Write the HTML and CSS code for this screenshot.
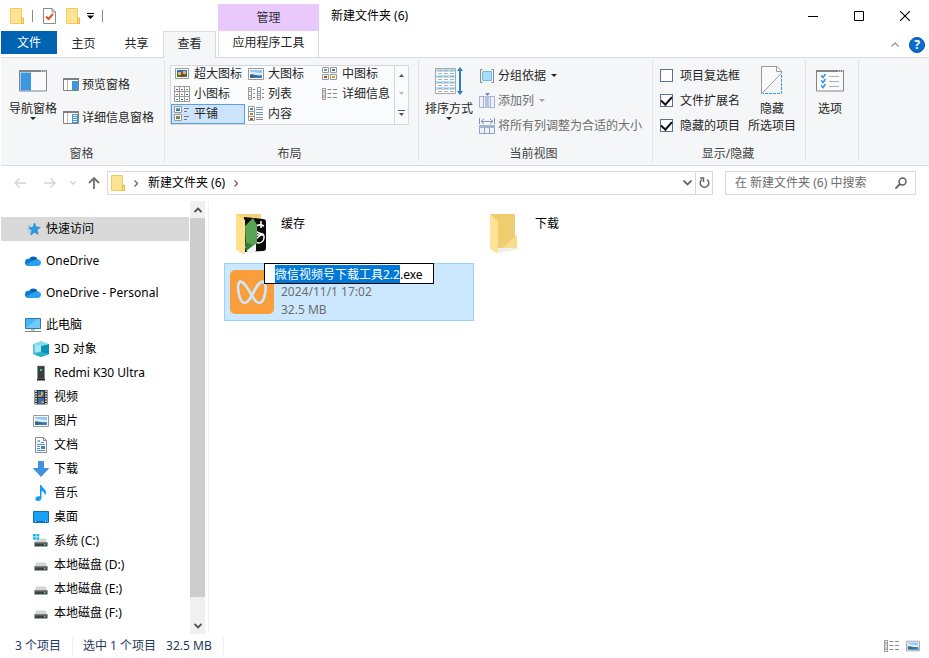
FILE: index.html
```html
<!DOCTYPE html>
<html lang="zh-CN">
<head>
    <meta charset="UTF-8">
    <meta name="viewport" content="width=device-width, initial-scale=1.0">
    <title>新建文件夹 (6)</title>
    <link rel="stylesheet" href="styles.css">
</head>
<body>
    <svg class="symbols" aria-hidden="true">
        <symbol id="i-folder" viewBox="0 0 14 16">
            <path d="M.5.5h11v9.5h2v5.5H.5z" fill="#ffe394" stroke="#efcb62"/>
            <path d="M11.5 10.5v5h2v-5z" fill="#ffe394" stroke="#e8b93c"/>
        </symbol>
        <symbol id="i-cloud" viewBox="0 0 16 16">
            <path d="M4 6.5A4.600 4.600 0 0 1 12.600 6.500L9 11z" fill="#0a5fb5"/>
            <path d="M3.500 13a3.600 3.600 0 0 1 .3-7.200c1.500-.3 2.700.3 3.700 1.200L11 11z" fill="#0f78d4"/>
            <path d="M3.500 13c-1.400 0-2.400-.6-3-1.600L9 7.300c1-.9 2.400-1.100 3.700-.8 2 .2 3.300 1.600 3.300 3.300s-1.400 3.200-3.200 3.200z" fill="#28a0ea"/>
        </symbol>
        <symbol id="i-drive" viewBox="0 0 16 16">
            <path d="M3.500 5.500h9l2 4.500h-13z" fill="#d2d4d6"/>
            <path d="M1.500 9.500h13v4h-13z" fill="#3f4245"/>
            <path d="M1.500 9.500h13v1h-13z" fill="#777"/>
            <path d="M11 11h1.500v1.500H11z" fill="#3ce04f"/>
        </symbol>
        <symbol id="i-picture" viewBox="0 0 16 16">
            <path d="M.5 2.500h15v11H.5z" fill="#fff" stroke="#999"/>
            <path d="M2 4h12v8H2z" fill="#8ec8f6"/>
            <path d="M2 6c3-1 5 1 12 1v2H2z" fill="#dceefb"/>
            <path d="M2 8.500c3-1 5 1.500 12 1V12H2z" fill="#3d6a78"/>
            <path d="M6 11l8-1v2H5z" fill="#3b7ed0"/>
        </symbol>
        <symbol id="i-details" viewBox="0 0 16 16">
            <path d="M.5 2.500h3v11h-3zM.5 6h3M.5 10h3" fill="#fff" stroke="#999"/>
            <path d="M1.500 4h1v1h-1z" fill="#36c"/><path d="M1.500 7.500h1v1h-1z" fill="#396"/><path d="M1.500 11h1v1h-1z" fill="#c33"/>
            <path d="M5.500 3.500h4m1.500 0h4m-9.500 4h4m1.500 0h4m-9.500 4h4m1.500 0h4" stroke="#8a8a8a"/>
        </symbol>
    </svg>

    <header class="title-bar">
        <div class="quick-access">
            <svg width="14" height="16"><use href="#i-folder"/></svg>
            <span class="bar"></span>
            <button type="button" aria-label="属性">
                <svg width="13" height="16" viewBox="0 0 13 16">
                    <path d="M.5.5h8.500l3.500 3.500v11.500H.5z" fill="#fff" stroke="#8b8b8b"/>
                    <path d="M9 .5V4h3.500" fill="none" stroke="#8b8b8b"/>
                    <path d="M3 8.500l2.500 2.500L10 6" fill="none" stroke="#e0521d" stroke-width="2"/>
                </svg>
            </button>
            <button type="button" aria-label="新建文件夹"><svg width="14" height="16"><use href="#i-folder"/></svg></button>
            <button type="button" class="customize" aria-label="自定义"><svg width="7" height="6" viewBox="0 0 7 6"><path d="M0 0h7v1H0zM0 2.500h7L3.500 6z"/></svg></button>
            <span class="bar"></span>
        </div>
        <div class="context-title">管理</div>
        <h1 class="window-title">新建文件夹 (6)</h1>
        <div class="window-buttons">
            <button type="button" aria-label="最小化"><svg width="10" height="10" viewBox="0 0 10 10"><path d="M0 5.500h10" stroke="#000"/></svg></button>
            <button type="button" aria-label="最大化"><svg width="10" height="10" viewBox="0 0 10 10"><path d="M.5.5h9v9h-9z" fill="none" stroke="#000"/></svg></button>
            <button type="button" aria-label="关闭"><svg width="10" height="10" viewBox="0 0 10 10"><path d="M0 0l10 10M10 0L0 10" stroke="#000" stroke-width="1.100"/></svg></button>
        </div>
    </header>

    <nav class="tabs">
        <button type="button" class="tab tab-file">文件</button>
        <button type="button" class="tab">主页</button>
        <button type="button" class="tab">共享</button>
        <button type="button" class="tab active">查看</button>
        <button type="button" class="tab tab-context">应用程序工具</button>
        <div class="tabs-right">
            <button type="button" aria-label="最小化功能区"><svg width="8" height="5" viewBox="0 0 8 5"><path d="M.5 4.500L4 1l3.500 3.500" fill="none" stroke="#999" stroke-width="1.300"/></svg></button>
            <button type="button" class="help" aria-label="帮助">?</button>
        </div>
    </nav>

    <section class="ribbon">
        <div class="group group-panes">
            <div class="group-body">
                <button type="button" class="big">
                    <span class="big-icon">
                        <svg width="28" height="22" viewBox="0 0 28 22">
                            <path d="M.5.500h27v20.500H.5z" fill="#fafafa" stroke="#858585"/>
                            <path d="M0 0h28v2H0z" fill="#858585"/>
                            <path d="M22 .5h1v1h-1zM24 .5h1v1h-1zM26 .5h1v1h-1z" fill="#fff"/>
                            <path d="M1.500 2.500h10.500v18H1.500z" fill="#3d97e0"/>
                        </svg>
                    </span>
                    导航窗格
                    <span class="caret"></span>
                </button>
                <div class="stack">
                    <button type="button" class="small">
                        <svg width="16" height="13" viewBox="0 0 16 13">
                            <path d="M.5.500h15v12H.5z" fill="#fff" stroke="#808080"/><path d="M0 0h16v2H0z" fill="#808080"/>
                            <path d="M4.500 2v10" stroke="#bbb"/><path d="M9 3h6v9H9z" fill="#3d97e0"/>
                        </svg>
                        预览窗格
                    </button>
                    <button type="button" class="small">
                        <svg width="16" height="13" viewBox="0 0 16 13">
                            <path d="M.5.500h15v12H.5z" fill="#fff" stroke="#808080"/><path d="M0 0h16v2H0z" fill="#808080"/>
                            <path d="M4.500 2v10" stroke="#bbb"/><path d="M9 3h6v9H9z" fill="#3d97e0"/>
                            <path d="M10 4.500h4m-4 2h4m-4 2h4m-4 2h4" stroke="#fff"/>
                        </svg>
                        详细信息窗格
                    </button>
                </div>
            </div>
            <div class="group-name">窗格</div>
        </div>

        <div class="group group-layout">
            <div class="group-body">
                <div class="gallery">
                    <div class="gallery-items">
                        <button type="button" class="view first-row">
                            <svg width="16" height="16" viewBox="0 0 16 16"><path d="M1.500 2.500h13v10h-13z" fill="#fff" stroke="#999"/><path d="M3 4h10v7H3z" fill="#3467c4"/><path d="M3 8h10v3H3z" fill="#397a35"/><path d="M4 6h3v3H4zM9 5h3v3H9z" fill="#efb72d"/><path d="M7 8h3v3H7z" fill="#a33026"/></svg>
                            超大图标
                        </button>
                        <button type="button" class="view first-row"><svg width="16" height="16"><use href="#i-picture"/></svg>大图标</button>
                        <button type="button" class="view first-row">
                            <svg width="16" height="16" viewBox="0 0 16 16"><path d="M.5 1.500h6v5h-6zM8.500 1.500h6v5h-6zM.5 8.500h6v5h-6zM8.500 8.500h6v5h-6z" fill="#fff" stroke="#999"/><path d="M2 3h3v2H2z" fill="#5b9bd0"/><path d="M10 3h3v2h-3z" fill="#4c8a52"/><path d="M2 10h3v2H2z" fill="#c43b1c"/><path d="M10 10h3v2h-3z" fill="#d6a21d"/></svg>
                            中图标
                        </button>
                        <button type="button" class="view">
                            <svg width="16" height="16" viewBox="0 0 16 16"><path d="M.5.500h15v15H.5zM5.500.500v15M10.500.500v15M.5 5.500h15M.5 10.500h15" fill="#fff" stroke="#999"/><path d="M2 3h2v1H2zM12 8h2v1h-2zM7 13h2v1H7z" fill="#36c"/><path d="M7 3h2v1H7zM2 8h2v1H2zM12 13h2v1h-2z" fill="#c52"/><path d="M12 3h2v1h-2zM7 8h2v1H7zM2 13h2v1H2z" fill="#396"/></svg>
                            小图标
                        </button>
                        <button type="button" class="view">
                            <svg width="16" height="16" viewBox="0 0 16 16"><path d="M.5 1.500h3v12h-3zM.5 5.500h3m-3 4h3M9.500 1.500h3v12h-3zM9.500 5.500h3m-3 4h3" fill="#fff" stroke="#999"/><path d="M5 3.500h2m-2 4h2m-2 4h2M14 3.500h2m-2 4h2m-2 4h2" stroke="#888"/><path d="M1.500 3h1v1h-1zM10.500 7h1v1h-1z" fill="#36c"/><path d="M1.500 11h1v1h-1zM10.500 11h1v1h-1z" fill="#c33"/></svg>
                            列表
                        </button>
                        <button type="button" class="view"><svg width="16" height="16"><use href="#i-details"/></svg>详细信息</button>
                        <button type="button" class="view selected">
                            <svg width="16" height="16" viewBox="0 0 16 16"><path d="M.5.500h7v6h-7zM.5 8.500h7v6h-7z" fill="#fff" stroke="#999"/><path d="M2 2h4v3H2z" fill="#4f9ad8"/><path d="M2 4h4v1H2z" fill="#34684a"/><path d="M2 10h4v3H2z" fill="#4a9a50"/><path d="M4 10h2v2H4z" fill="#d86b22"/><path d="M10 2.500h5m-5 3h3m-3 5h5m-5 3h3" stroke="#777"/></svg>
                            平铺
                        </button>
                        <button type="button" class="view">
                            <svg width="16" height="16" viewBox="0 0 16 16"><path d="M.5.500h6v14h-6zM.5 5.500h6M.5 10.500h6" fill="#fff" stroke="#999"/><path d="M2 2h3v2H2z" fill="#3f7fc4"/><path d="M2 7h3v2H2z" fill="#a58a25"/><path d="M2 12h3v2H2z" fill="#b54a30"/><path d="M8 1.500h7m-7 5h7m-7 5h7" stroke="#6d9be6"/><path d="M8 3.500h7m-7 5h7m-7 5h7" stroke="#888"/></svg>
                            内容
                        </button>
                    </div>
                    <div class="gallery-scroll">
                        <button type="button" aria-label="上一行"><svg width="5" height="3" viewBox="0 0 5 3"><path d="M0 3h5L2.500 0z" fill="#44546a"/></svg></button>
                        <button type="button" aria-label="下一行"><svg width="5" height="3" viewBox="0 0 5 3"><path d="M0 0h5L2.500 3z" fill="#b4bac2"/></svg></button>
                        <button type="button" aria-label="更多"><svg width="7" height="6" viewBox="0 0 7 6"><path d="M0 0h7v1H0zM1 3h5L3.500 6z" fill="#44546a"/></svg></button>
                    </div>
                </div>
            </div>
            <div class="group-name">布局</div>
        </div>

        <div class="group group-current">
            <div class="group-body">
                <button type="button" class="big">
                    <span class="big-icon">
                        <svg width="30" height="28" viewBox="0 0 30 28">
                            <path d="M1.500 1.500h20v25h-20z" fill="#fff" stroke="#a8a8a8"/>
                            <path d="M2 2h19v3H2zM2 8h19v3H2zM2 14h19v3H2zM2 20h19v3H2z" fill="#b5e0f7"/>
                            <path d="M4 3.500h16M4 6.500h16M4 9.500h16M4 12.500h16M4 15.500h16M4 18.500h16M4 21.500h16M4 24.500h16" fill="none" stroke="#b0b0b0" stroke-dasharray="4 2"/>
                            <path d="M25 3h2v22h-2z" fill="#2c7ec4"/><path d="M23 4l3-4 3 4zM23 24l3 4 3-4z" fill="#2c7ec4"/>
                        </svg>
                    </span>
                    排序方式
                    <span class="caret"></span>
                </button>
                <div class="stack">
                    <button type="button" class="small">
                        <svg width="16" height="16" viewBox="0 0 16 16"><path d="M3.500 1.500h-2v13h2M12.500 1.500h2v13h-2" fill="none" stroke="#8a8a8a"/><path d="M3.500 3.500h9v9h-9z" fill="#a9dcfb" stroke="#6fb9e8"/></svg>
                        分组依据
                        <span class="caret"></span>
                    </button>
                    <button type="button" class="small" disabled>
                        <svg width="16" height="16" viewBox="0 0 16 16"><path d="M.5 3.500h15v11H.5zM4.500 3v11M11.500 3v11" fill="#eef1f8" stroke="#a3b2cf"/><path d="M6 3h4v12H6z" fill="#b3c2df"/><path d="M6 0h5L8.500 3z" fill="#7288b5"/></svg>
                        添加列
                        <span class="caret"></span>
                    </button>
                    <button type="button" class="small" disabled>
                        <svg width="16" height="16" viewBox="0 0 16 16"><path d="M.5 0v6M15.500 0v6M2 3.500h12M5 1L2 3.500 5 6M11 1l3 2.500L11 6" fill="none" stroke="#7f93bb"/><path d="M.5 7.500h15v8H.5zM5.500 10v6M10.500 10v6" fill="#eef1f8" stroke="#8fa1c5"/><path d="M0 7h16v3H0z" fill="#a3b2cf"/></svg>
                        将所有列调整为合适的大小
                    </button>
                </div>
            </div>
            <div class="group-name">当前视图</div>
        </div>

        <div class="group group-show">
            <div class="group-body">
                <div class="stack">
                    <label class="check"><input type="checkbox">项目复选框</label>
                    <label class="check"><input type="checkbox" checked>文件扩展名</label>
                    <label class="check"><input type="checkbox" checked>隐藏的项目</label>
                </div>
                <button type="button" class="big">
                    <span class="big-icon">
                        <svg width="22" height="29" viewBox="0 0 22 29">
                            <path d="M.5 28V.500H16L20.500 5v2z" fill="#fafafa" stroke="#999"/>
                            <path d="M15.500.500v5h5" fill="none" stroke="#999"/>
                            <path d="M20.500 9v18.500H2" fill="none" stroke="#3d97e0" stroke-dasharray="3 1"/>
                        </svg>
                    </span>
                    隐藏<br>所选项目
                </button>
            </div>
            <div class="group-name">显示/隐藏</div>
        </div>

        <div class="group group-options">
            <div class="group-body">
                <button type="button" class="big">
                    <span class="big-icon">
                        <svg width="28" height="22" viewBox="0 0 28 22">
                            <path d="M.5.500h27v20.500H.5z" fill="#fafafa" stroke="#858585"/>
                            <path d="M0 0h28v2H0z" fill="#858585"/>
                            <path d="M22 .5h1v1h-1zM24 .5h1v1h-1zM26 .5h1v1h-1z" fill="#fff"/>
                            <path d="M5 5.500l2 2L9.500 4M5 10.500l2 2L9.500 9M5 15.500l2 2 2.500-3.500" fill="none" stroke="#3d97e0" stroke-width="1.600"/>
                            <path d="M13 6.500h10M13 11.500h10M13 16.500h10" stroke="#b0b0b0"/>
                        </svg>
                    </span>
                    选项
                </button>
            </div>
        </div>
    </section>

    <section class="address-row">
        <div class="history">
            <button type="button" aria-label="后退"><svg width="12" height="12" viewBox="0 0 12 12"><path d="M12 6H1M5.500 1.500L1 6l4.500 4.500" fill="none" stroke="#d5d5d5" stroke-width="1.500"/></svg></button>
            <button type="button" aria-label="前进"><svg width="12" height="12" viewBox="0 0 12 12"><path d="M0 6h11M6.500 1.500L11 6l-4.500 4.500" fill="none" stroke="#d5d5d5" stroke-width="1.500"/></svg></button>
            <button type="button" class="recent" aria-label="最近"><svg width="6" height="4" viewBox="0 0 6 4"><path d="M.5.500L3 3 5.500.5" fill="none" stroke="#cfcfcf" stroke-width="1.300"/></svg></button>
            <button type="button" class="up" aria-label="上移"><svg width="12" height="12" viewBox="0 0 12 12"><path d="M6 12V1M1 6l5-5 5 5" fill="none" stroke="#707070" stroke-width="1.800"/></svg></button>
        </div>
        <div class="address">
            <svg width="14" height="16"><use href="#i-folder"/></svg>
            <svg class="crumb-arrow" width="4" height="7" viewBox="0 0 4 7"><path d="M.5.500l3 3-3 3" fill="none" stroke="#666" stroke-width="1.300"/></svg>
            <a href="#">新建文件夹 (6)</a>
            <svg class="crumb-arrow" width="4" height="7" viewBox="0 0 4 7"><path d="M.5.500l3 3-3 3" fill="none" stroke="#666" stroke-width="1.300"/></svg>
            <button type="button" class="drop" aria-label="以前的位置"><svg width="9" height="6" viewBox="0 0 9 6"><path d="M.5.500l4 4 4-4" fill="none" stroke="#666" stroke-width="1.800"/></svg></button>
            <button type="button" class="refresh" aria-label="刷新"><svg width="11" height="12" viewBox="0 0 11 12"><path d="M8 2.500a4.300 4.300 0 1 1-5 0M1 1h3.500v4" fill="none" stroke="#666" stroke-width="1.500"/></svg></button>
        </div>
        <div class="search">
            <input type="text" aria-label="搜索" placeholder="在 新建文件夹 (6) 中搜索">
            <svg width="12" height="12" viewBox="0 0 12 12"><circle cx="7.500" cy="4.500" r="3.500" fill="none" stroke="#606060" stroke-width="1.500"/><path d="M5 7L.5 11.500" stroke="#606060" stroke-width="1.800"/></svg>
        </div>
    </section>

    <main class="main">
        <nav class="tree">
            <a href="#" class="root current"><svg width="16" height="16" viewBox="0 0 16 16"><path d="M9.500 2l1.600 4 4.200.3-3.300 2.700 1.200 4.500-3.700-2.300-3.800 2.800 1.200-4.400L3.800 6.800l4-.4z" fill="#2a9be8" stroke="#1878be" stroke-width=".6"/><path d="M3 5h2.500M2.500 8h3M3.500 11h2.500" stroke="#64b5ec"/></svg>快速访问</a>
            <a href="#" class="root"><svg width="16" height="16"><use href="#i-cloud"/></svg>OneDrive</a>
            <a href="#" class="root"><svg width="16" height="16"><use href="#i-cloud"/></svg>OneDrive - Personal</a>
            <a href="#" class="root"><svg width="16" height="16" viewBox="0 0 16 16"><path d="M.5 1.500h15v10H.5z" fill="#49b4f5" stroke="#3077ab"/><path d="M1 11L12 2h3v9z" fill="#72cbff"/><path d="M6 12h4v2H6z" fill="#b9c4cc"/><path d="M0 14.500h16" stroke="#7b8c99"/></svg>此电脑</a>
            <a href="#"><svg width="16" height="16" viewBox="0 0 16 16"><path d="M0 3l8-3 8 3-8 2z" fill="#7fdce8"/><path d="M0 3l8 2v11l-8-3z" fill="#5cc8dc"/><path d="M8 5l8-2v10l-8 3z" fill="#0594b4"/><path d="M8 11l8 2-8 3-8-3z" fill="#2bb0c8"/><path d="M8 5L2 3.500v8l6-1z" fill="#a6e6ee"/></svg>3D 对象</a>
            <a href="#"><svg width="16" height="16" viewBox="0 0 16 16"><path d="M4.500 1h7v13h-7z" fill="#393c3f" stroke="#888" stroke-width=".6"/><path d="M7 4h2v2H7z" fill="#3ce04f"/><path d="M4 14h8v1.500H4z" fill="#222"/></svg>Redmi K30 Ultra</a>
            <a href="#"><svg width="16" height="16" viewBox="0 0 16 16"><path d="M1.500 1h13v14.500h-13z" fill="#333"/><path d="M5 2h6v6H5zM5 9h6v6H5z" fill="#3c69be"/><path d="M5 6h4v2H5zM8 12h3v2H8z" fill="#b9a035"/><path d="M8 3h2v3H8z" fill="#d9a632"/><path d="M3 1.500v14M13 1.500v14" stroke="#eee" stroke-width="1.500" stroke-dasharray="1.500 1"/></svg>视频</a>
            <a href="#"><svg width="16" height="16"><use href="#i-picture"/></svg>图片</a>
            <a href="#"><svg width="16" height="16" viewBox="0 0 16 16"><path d="M2.500.500h8l3 3v12h-11z" fill="#fff" stroke="#8b8b8b"/><path d="M10.500.500v3h3" fill="none" stroke="#8b8b8b"/><path d="M4 5.500L6 3l1 2.500M8 5.500h3M4 7.500h8M4 9.500h3M4 11.500h3M4 13.500h8" fill="none" stroke="#4a96cf"/><path d="M8 9h4v3H8z" fill="#3e83b4"/></svg>文档</a>
            <a href="#"><svg width="16" height="16" viewBox="0 0 16 16"><path d="M5.500.500h5v7h5L8 15.500.5 7.500h5z" fill="#3d93e0" stroke="#2a78c0" stroke-width=".7"/></svg>下载</a>
            <a href="#"><svg width="16" height="16" viewBox="0 0 16 16"><path d="M7 0h1.500c.5 3 4.500 4 4.500 7.500 0 1.500-.7 2.500-1.300 3C12 7.500 10 6.500 8.500 6v6.500C8.500 14.500 7 16 5 16s-3-1-2.600-2.500C2.800 12 5 11 7 11.500z" fill="#139df2"/></svg>音乐</a>
            <a href="#"><svg width="16" height="16" viewBox="0 0 16 16"><path d="M.5 2.500h15v11H.5z" fill="#18a0f8" stroke="#0b70b5"/><path d="M1 12h14v1.500H1z" fill="#0c70b8"/><path d="M2 12.500h1m9 0h1m1 0h.5" stroke="#fff"/></svg>桌面</a>
            <a href="#"><svg width="16" height="16" viewBox="0 0 16 16"><use href="#i-drive"/><path d="M0 0h7v7H0z" fill="#fff"/><path d="M0 1h2.800v2.500H0zM3.500 1h2.800v2.500H3.500zM0 4.200h2.800v2.500H0zM3.500 4.200h2.800v2.500H3.500z" fill="#14b4f0"/></svg>系统 (C:)</a>
            <a href="#"><svg width="16" height="16"><use href="#i-drive"/></svg>本地磁盘 (D:)</a>
            <a href="#"><svg width="16" height="16"><use href="#i-drive"/></svg>本地磁盘 (E:)</a>
            <a href="#"><svg width="16" height="16"><use href="#i-drive"/></svg>本地磁盘 (F:)</a>
        </nav>
        <div class="scrollbar">
            <button type="button" aria-label="向上滚动"><svg width="8" height="6" viewBox="0 0 8 6"><path d="M.5 5L4 1.500 7.500 5" fill="none" stroke="#505050" stroke-width="1.800"/></svg></button>
            <div class="track"><div class="thumb"></div></div>
            <button type="button" aria-label="向下滚动"><svg width="8" height="6" viewBox="0 0 8 6"><path d="M.5 1L4 4.500 7.500 1" fill="none" stroke="#505050" stroke-width="1.800"/></svg></button>
        </div>
        <div class="files">
            <div class="file">
                <svg width="44" height="44" viewBox="0 0 44 44">
                    <path d="M6 4h25v36H6z" fill="#f3d27b"/>
                    <path d="M14 7l19 2q3 0 3 3v26q0 3-3 3l-19 1z" fill="#0b0b0b"/>
                    <path d="M34 16c-6-3-11 1-8 5s9 1 8 7-7 6-9 3M31 11v7M27 25h7M26 29l6-5" fill="none" stroke="#fff" stroke-width="1.500"/>
                    <path d="M15 37l11-16v20l-7 4z" fill="#f4f4f4"/>
                    <path d="M15 16l8-8 4 7v18l-11 8z" fill="#58a355"/>
                    <path d="M15 32l8 3-7 6z" fill="#2e7d3a"/>
                    <path d="M6 4l9 6v35l-9-5z" fill="#ffe08c"/>
                </svg>
                <div class="file-text"><div>缓存</div></div>
            </div>
            <div class="file">
                <svg width="44" height="44" viewBox="0 0 44 44">
                    <path d="M13 38h20l3 1-21 4z" fill="#eee"/>
                    <path d="M6 4h25v22h2v12H6z" fill="#f0cc70"/>
                    <path d="M31 26h2v12H18z" fill="#f7dc8c"/>
                    <path d="M6 4l8 7v33l-8-5z" fill="#ffe394"/>
                </svg>
                <div class="file-text"><div>下载</div></div>
            </div>
            <div class="file selected">
                <svg width="44" height="44" viewBox="0 0 44 44">
                    <rect width="44" height="44" rx="5" fill="#fa9d3b"/>
                    <path d="M10 11.500C6 15 9 33 15 33s11-22 18-21.500C38 15 35 33 29 33S17 11 10 11.500z" fill="none" stroke="#cce8ff" stroke-width="2.600"/>
                </svg>
                <div class="file-text">
                    <div class="rename"><input type="text" id="rename" aria-label="重命名" value="微信视频号下载工具2.2.exe"></div>
                    <div class="meta">2024/11/1 17:02</div>
                    <div class="meta">32.5 MB</div>
                </div>
            </div>
        </div>
    </main>

    <footer class="status">
        <span class="count">3 个项目</span>
        <span class="chosen">选中 1 个项目</span>
        <span class="size">32.5 MB</span>
        <div class="view-switch">
            <button type="button" aria-label="详细信息"><svg width="16" height="16"><use href="#i-details"/></svg></button>
            <button type="button" aria-label="大图标"><svg width="14" height="14"><use href="#i-picture"/></svg></button>
        </div>
    </footer>
    <script src="script.js"></script>
</body>
</html>
```

FILE: styles.css
```css
* { box-sizing: border-box; }
html { height: 100%; }
body {
    display: flex;
    flex-direction: column;
    height: 100%;
    margin: 0;
    padding-left: 1px;
    background: #fff;
    color: #000;
    font: 12px/18px "Noto Sans", "Noto Sans CJK SC", sans-serif;
    overflow: hidden;
}
button { display: flex; align-items: center; justify-content: center; margin: 0; padding: 0; border: 0; background: none; color: inherit; font: inherit; white-space: nowrap; }
input { font: inherit; color: inherit; }
a { color: inherit; text-decoration: none; }
svg { display: block; flex: none; }
.symbols { position: absolute; width: 0; height: 0; }

/* title bar */
.title-bar { display: grid; grid-template-columns: 217px 101px 1fr auto; height: 31px; flex: none; }
.quick-access { display: flex; align-items: center; padding-left: 9px; gap: 10px; }
.quick-access .bar { width: 1px; height: 12px; margin-left: -2px; background: #8c8c8c; }
.quick-access .customize { margin-left: -3px; }
.context-title { margin-top: 4px; background: #e9c9fc; color: #333; line-height: 27px; text-align: center; }
.window-title { margin: 0; padding-left: 12px; font-size: 12px; font-weight: normal; line-height: 31px; }
.window-buttons { display: flex; padding-right: 1px; }
.window-buttons button { width: 46px; }

/* tabs */
.tabs { display: flex; flex: none; height: 27px; color: #262626; box-shadow: inset 0 -1px #dadbdc; }
.tab { min-width: 53px; padding-bottom: 2px; }
.tab-file { height: 23px; padding: 0 16px; background: #0063b1; color: #fff; }
.tab.active { border: 1px solid #dadbdc; border-bottom: 0; background: #f5f6f7; }
.tab-context { width: 101px; height: 26px; margin-left: 2px; border: solid #dcdcdc; border-width: 0 1px; }
.tabs-right { display: flex; align-items: center; gap: 10px; margin-left: auto; padding-right: 4px; }
.help { width: 16px; height: 16px; border: 1px solid #08529b; border-radius: 50%; background: #0a6cce; color: #fff; font-weight: bold; }

/* ribbon */
.ribbon { display: flex; flex: none; height: 108px; padding: 2px 0 3px; background: #f5f6f7; border-bottom: 1px solid #dadbdc; color: #262626; }
.group { display: flex; flex-direction: column; justify-content: space-between; border-right: 1px solid #e2e3e4; }
.group-body { display: flex; align-items: flex-start; gap: 6px; padding-top: 3px; }
.group-name { color: #444; line-height: 16px; text-align: center; }
.group-panes { padding: 0 10px 0 8px; }
.group-layout { padding: 0 9px 0 5px; }
.group-current { padding: 0 10px 0 6px; }
.group-show { padding: 0 9px 0 7px; }
.group-show .group-body { gap: 8px; }
.group-options { padding: 0 14px 0 10px; }
.stack { display: grid; justify-items: start; }
.group-panes .stack { gap: 8px; padding-top: 9px; }
.big { flex-direction: column; line-height: 17px; }
.big-icon { display: flex; align-items: center; height: 35px; margin-bottom: 2px; }
.small { gap: 3px; height: 25px; }
.small:disabled { color: #6d6d6d; }
.small:disabled .caret { opacity: .4; }
.caret { border: 3px solid transparent; border-top-color: #262626; border-bottom: 0; }
.small .caret { margin-left: 2px; }
.check { display: flex; align-items: center; gap: 7px; height: 25px; }
.check input { appearance: none; width: 13px; height: 13px; margin: 0; border: 1px solid #5a7394; background: #fff; display: grid; place-items: center; }
.check input:checked::before { content: ""; width: 9px; height: 5px; margin-bottom: 3px; border: solid #111; border-width: 0 0 2px 2px; transform: rotate(-48deg); }

/* the first gallery row is scrolled a little under the top edge */
.gallery { display: flex; height: 60px; margin-top: 2px; border: 1px solid #d5d9de; background: #fafbfc; }
.gallery-items { display: grid; grid-template-columns: 74px 74px 75px; grid-template-rows: 17px 21px 20px; }
.view { justify-content: flex-start; gap: 4px; padding-left: 2px; border: 1px solid transparent; line-height: 14px; }
.view.first-row { padding-bottom: 2px; border-width: 0 1px; }
.view.selected { background: #cde3fa; border-color: #5c9fdd; }
.gallery-scroll { display: grid; width: 14px; border-left: 1px solid #d5d9de; }

/* address */
.address-row { display: flex; align-items: center; flex: none; height: 34px; padding-right: 13px; }
.history { display: flex; width: 106px; padding-left: 13px; align-items: center; }
.history button { margin-right: 18px; }
.history .recent { margin-right: 12px; margin-left: -4px; }
.history .up { margin-right: 0; }
.address { display: flex; align-items: center; flex: 1; height: 24px; border: 1px solid #d9d9d9; padding-left: 3px; }
.crumb-arrow { margin: 0 10px 0 9px; }
.address .drop { width: 15px; margin-left: auto; }
.address .refresh { width: 17px; height: 22px; border-left: 1px solid #d9d9d9; }
.search { display: flex; align-items: center; width: 191px; height: 24px; margin-left: 12px; padding: 0 8px 0 9px; border: 1px solid #d9d9d9; }
.search input { flex: 1; min-width: 0; padding: 0; border: 0; outline: 0; }
.search input::placeholder { color: #6d6d6d; opacity: 1; }

/* main */
.main { display: flex; flex: 1; min-height: 0; padding-top: 1px; }
.tree { width: 188px; padding-top: 16px; }
.tree a { display: flex; align-items: center; gap: 5px; height: 24px; padding-left: 32px; white-space: nowrap; }
.tree .root { margin-bottom: 8px; padding-left: 24px; }
.tree .root:nth-child(4) { margin-bottom: 0; }
.tree .current { background: #d9d9d9; }
.scrollbar { display: flex; flex-direction: column; width: 15px; margin-left: 1px; background: #f0f0f0; }
.scrollbar button { height: 17px; }
.track { flex: 1; }
.thumb { height: 95%; background: #cdcdcd; }
.files { display: grid; grid-template-columns: repeat(auto-fill, 250px); grid-auto-rows: 58px; gap: 2px 4px; align-content: start; flex: 1; margin-left: 3px; padding: 2px 0 0 15px; border-left: 1px solid #f2f2f2; }
.file { display: flex; align-items: center; gap: 7px; padding-left: 5px; border: 1px solid transparent; }
.file.selected { background: #cce8ff; border-color: #99d1ff; }
.file-text { align-self: stretch; padding: 11px 0 0; }
.selected .file-text { padding: 0; }
.meta { color: #6d6d6d; }
.rename { position: relative; height: 19px; }
.rename input { position: absolute; top: -1px; left: -17px; width: 170px; height: 21px; padding: 0 0 0 10px; border: 1px solid #000; outline: 0; background: #fff; }
.rename input::selection { background: #0078d7; color: #fff; }

/* status bar */
.status { display: flex; align-items: center; flex: none; height: 24px; padding: 0 9px 0 14px; color: #1e395b; }
.status .count { padding-right: 11px; border-right: 1px solid #f0f0f0; }
.status .chosen { padding: 0 10px; }
.status .size { padding-right: 11px; border-right: 1px solid #f0f0f0; }
.view-switch { display: flex; align-items: center; gap: 6px; margin-left: auto; }
```

FILE: script.js
```javascript
// select the file name without its extension
const rename = document.getElementById('rename');
rename.focus();
rename.setSelectionRange(0, rename.value.lastIndexOf('.'));
```
